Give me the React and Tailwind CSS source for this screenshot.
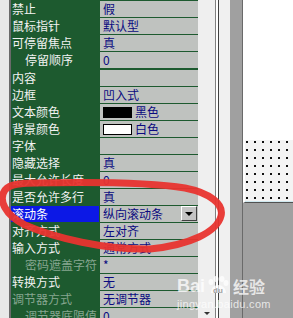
import React from "react";

const rows = [
  { name: "禁止", value: "假" },
  { name: "鼠标指针", value: "默认型" },
  { name: "可停留焦点", value: "真" },
  { name: "停留顺序", value: "0", indent: true, thick: true },
  { name: "内容", value: "" },
  { name: "边框", value: "凹入式" },
  { name: "文本颜色", value: "黑色", swatch: "black" },
  { name: "背景颜色", value: "白色", swatch: "white" },
  { name: "字体", value: "" },
  { name: "隐藏选择", value: "真" },
  { name: "最大允许长度", value: "0" },
  { name: "是否允许多行", value: "真" },
  { name: "滚动条", value: "纵向滚动条", selected: true },
  { name: "对齐方式", value: "左对齐" },
  { name: "输入方式", value: "通常方式" },
  { name: "密码遮盖字符", value: "*", indent: true, disabled: true },
  { name: "转换方式", value: "无" },
  { name: "调节器方式", value: "无调节器", disabled: true },
  { name: "调节器底限值", value: "0", indent: true, disabled: true },
];

const PropRow = ({ row }) => {
  const border = row.thick ? "h-[18px] border-b-2" : "h-[17px] border-b";
  return (
    <div className={`flex shrink-0 ${border} border-[#1d5a2f]`}>
      <div
        className={`w-[88px] flex items-center leading-none whitespace-nowrap ${row.indent ? "pl-[14px]" : "pl-[1px]"} ${
          row.selected ? "bg-[#0c18e6] text-white" : row.disabled ? "bg-[#1d5a2f] text-[#86a690]" : "bg-[#1d5a2f] text-[#f2f2f2]"
        }`}
      >
        {row.name}
      </div>
      <div className="w-[1px] bg-[#1d5a2f]" />
      <div className="w-[98px] bg-[#bfc2bf] flex items-center pl-[3px] text-[#0a0a80] leading-none whitespace-nowrap relative">
        {row.swatch && (
          <span
            className={`w-[29px] h-[11px] mr-[3px] border border-black ${row.swatch === "black" ? "bg-black" : "bg-white"}`}
          />
        )}
        {row.value}
        {row.selected && (
          <span className="absolute right-[1px] top-0 w-[16px] h-[15px] bg-[#c4c4c4] border-t border-l border-t-white border-l-white border-b border-r border-b-[#404040] border-r-[#404040] flex items-center justify-center">
            <span className="w-0 h-0 border-l-[4px] border-r-[4px] border-t-[4px] border-l-transparent border-r-transparent border-t-black" />
          </span>
        )}
      </div>
    </div>
  );
};

export default function App() {
  return (
    <div
      className="w-[293px] h-[318px] overflow-hidden relative flex bg-[#a0a0a0] text-[12px]"
      style={{ fontFamily: '"Noto Sans CJK SC", "Noto Sans", sans-serif' }}
    >
      {/* left edge */}
      <div className="w-[9px] bg-[#e8e8e8] shrink-0" />
      <div className="w-[2px] bg-[#6a6a6a] shrink-0" />

      {/* property grid */}
      <div className="w-[187px] shrink-0 flex flex-col border-t border-[#1d5a2f] bg-[#1d5a2f]">
        {rows.map((r) => (
          <PropRow key={r.name} row={r} />
        ))}
      </div>

      {/* scrollbar */}
      <div className="w-[17px] shrink-0 bg-[#efefef] flex flex-col justify-end items-center pb-[3px]">
        <span className="w-0 h-0 border-l-[3px] border-r-[3px] border-t-[3px] border-l-transparent border-r-transparent border-t-[#333]" />
      </div>
      <div className="w-[1px] bg-[#808080] shrink-0" />
      <div className="w-[2px] bg-white shrink-0" />
      <div className="w-[1px] bg-[#404040] shrink-0" />
      <div className="w-[11px] bg-[#f0f0f0] shrink-0" />

      {/* designer area */}
      <div className="flex-1 flex">
        <div className="w-[12px] bg-[#a0a0a0] shrink-0" />
        <div className="w-[1px] bg-[#6a6a6a] shrink-0" />
        <div className="flex-1 flex flex-col">
          <div className="h-[203px] flex flex-col border-l-2 border-b border-l-white border-b-[#505050]">
            <div className="h-[140px] bg-white" />
            <div className="flex-1 bg-[#f4f4f4] bg-[radial-gradient(circle,#111_0.8px,transparent_1.1px)] bg-[length:8px_8px] bg-[position:-2px_-2px] border-b border-[#cfe8ef]" />
          </div>
        </div>
      </div>

      {/* watermark */}
      <div className="absolute left-[177px] top-[276px] flex flex-col items-start text-white/75 pointer-events-none">
        <div className="flex items-center leading-none text-[18px] font-bold" style={{ fontFamily: '"Liberation Sans", Arial, sans-serif' }}>
          <span>Bai</span>
          <svg width="24" height="20" viewBox="0 0 24 20" className="mx-[1px]">
            <g fill="rgba(255,255,255,0.75)">
              <ellipse cx="5" cy="6" rx="2.5" ry="3" />
              <ellipse cx="10" cy="3" rx="2.5" ry="3" />
              <ellipse cx="16" cy="3" rx="2.5" ry="3" />
              <ellipse cx="20" cy="7" rx="2.5" ry="3" />
              <path d="M5 17 C5 11 9 9 12 9 C16 9 20 12 20 17 Z" />
            </g>
            <text x="7" y="17" fontSize="8" fill="#a0a0a0" fontFamily="Liberation Sans, sans-serif" fontWeight="bold">du</text>
          </svg>
          <span className="text-[16px] ml-[2px]" style={{ fontFamily: '"Noto Sans CJK SC", sans-serif' }}>经验</span>
        </div>
        <div className="text-[11px] leading-none mt-[3px] tracking-[0.3px]" style={{ fontFamily: '"Liberation Sans", Arial, sans-serif' }}>
          jingyan.baidu.com
        </div>
      </div>

      {/* red annotation */}
      <svg className="absolute inset-0 pointer-events-none" width="293" height="318" viewBox="0 0 293 318">
        <path
          d="M30 183 C80 182 150 182 185 188 C210 193 224 204 221 216 C217 232 190 245 150 249 C105 250 55 238 25 225 C5 215 -2 200 5 190 C10 184 20 183 40 183"
          fill="none"
          stroke="#e8342f"
          strokeWidth="7"
          strokeLinecap="round"
          strokeLinejoin="round"
          opacity="0.95"
        />
      </svg>
    </div>
  );
}
